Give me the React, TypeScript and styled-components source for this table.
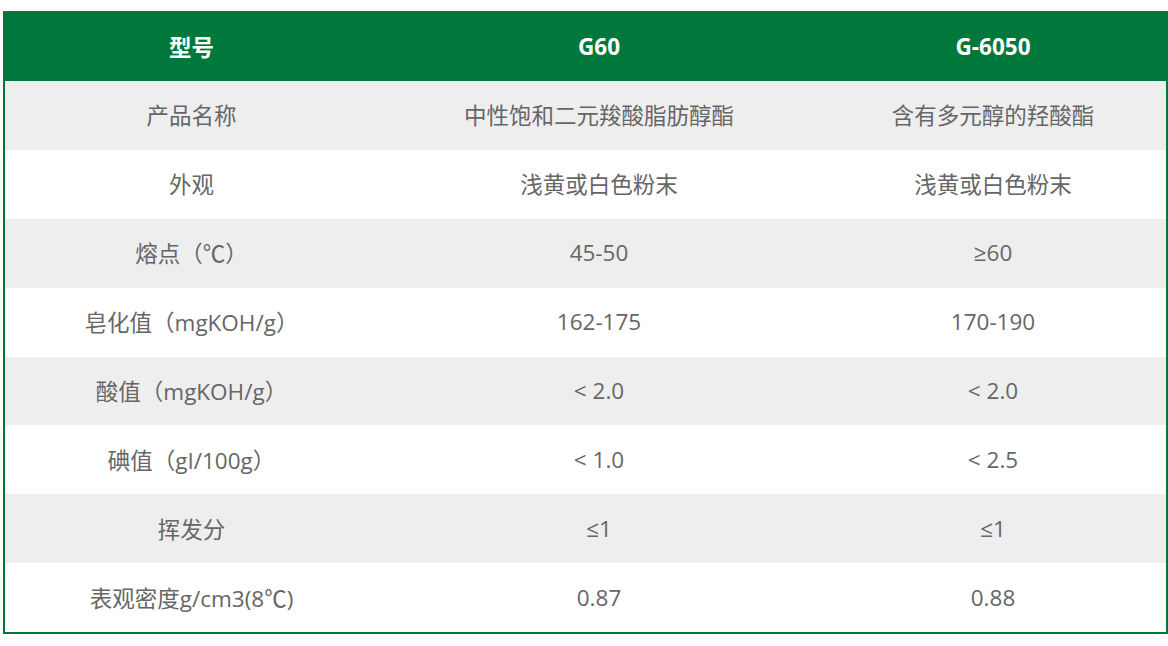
import React from "react";
import styled, { createGlobalStyle } from "styled-components";

const GlobalStyle = createGlobalStyle`
  html, body {
    margin: 0;
    padding: 0;
    background: #fff;
  }
`;

const Wrap = styled.div`
  padding: 11px 2px 0 3px;
`;

const Table = styled.table`
  width: 1163px;
  border-collapse: collapse;
  table-layout: fixed;
  border: 2px solid #00783c;
  font-family: "Open Sans", "Noto Sans CJK SC", sans-serif;
  font-size: 22.5px;
`;

const HeadCell = styled.th`
  height: 66px;
  padding: 0 0 2px;
  background: #00783c;
  color: #fff;
  font-weight: 700;
  text-align: center;
  vertical-align: middle;
`;

const Row = styled.tr<{ $shade: boolean }>`
  background: ${(p) => (p.$shade ? "#eeeeee" : "#ffffff")};
`;

const Cell = styled.td`
  height: 67.9px;
  padding: 0 0 1px;
  color: #666;
  text-align: center;
  vertical-align: middle;
`;

const rows: [string, string, string][] = [
  ["产品名称", "中性饱和二元羧酸脂肪醇酯", "含有多元醇的羟酸酯"],
  ["外观", "浅黄或白色粉末", "浅黄或白色粉末"],
  ["熔点（℃）", "45-50", "≥60"],
  ["皂化值（mgKOH/g）", "162-175", "170-190"],
  ["酸值（mgKOH/g）", "< 2.0", "< 2.0"],
  ["碘值（gI/100g）", "< 1.0", "< 2.5"],
  ["挥发分", "≤1", "≤1"],
  ["表观密度g/cm3(8℃)", "0.87", "0.88"],
];

export default function App() {
  return (
    <>
      <GlobalStyle />
      <Wrap>
        <Table>
          <colgroup>
            <col style={{ width: 374 }} />
            <col style={{ width: 442 }} />
            <col style={{ width: 347 }} />
          </colgroup>
          <thead>
            <tr>
              <HeadCell>型号</HeadCell>
              <HeadCell>G60</HeadCell>
              <HeadCell>G-6050</HeadCell>
            </tr>
          </thead>
          <tbody>
            {rows.map((r, i) => (
              <Row key={r[0]} $shade={i % 2 === 0}>
                <Cell>{r[0]}</Cell>
                <Cell>{r[1]}</Cell>
                <Cell>{r[2]}</Cell>
              </Row>
            ))}
          </tbody>
        </Table>
      </Wrap>
    </>
  );
}
